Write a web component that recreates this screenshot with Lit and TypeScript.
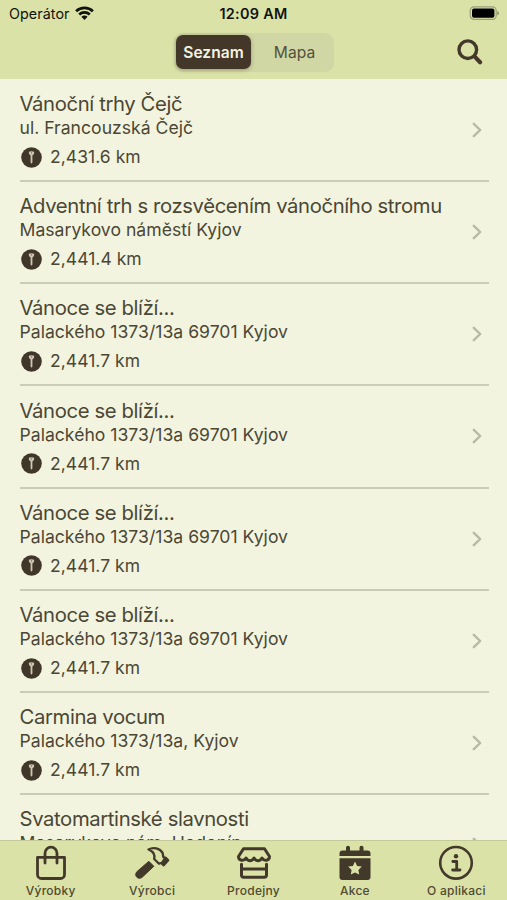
import { LitElement, html, css, svg } from "lit";
import { customElement, property } from "lit/decorators.js";

interface Market {
  title: string;
  address: string;
  distance: string;
}

const MARKETS: Market[] = [
  { title: "Vánoční trhy Čejč", address: "ul. Francouzská Čejč", distance: "2,431.6 km" },
  { title: "Adventní trh s rozsvěcením vánočního stromu", address: "Masarykovo náměstí Kyjov", distance: "2,441.4 km" },
  { title: "Vánoce se blíží...", address: "Palackého 1373/13a 69701 Kyjov", distance: "2,441.7 km" },
  { title: "Vánoce se blíží...", address: "Palackého 1373/13a 69701 Kyjov", distance: "2,441.7 km" },
  { title: "Vánoce se blíží...", address: "Palackého 1373/13a 69701 Kyjov", distance: "2,441.7 km" },
  { title: "Vánoce se blíží...", address: "Palackého 1373/13a 69701 Kyjov", distance: "2,441.7 km" },
  { title: "Carmina vocum", address: "Palackého 1373/13a, Kyjov", distance: "2,441.7 km" },
  { title: "Svatomartinské slavnosti", address: "Masarykovo nám. Hodonín", distance: "2,446.0 km" },
];

const TAB_ICONS: Record<string, unknown> = {
  bag: svg`<g fill="none" stroke="currentColor" stroke-width="2.800" stroke-linecap="round" stroke-linejoin="round">
    <path d="M4.500 13.300H31.500V30.500a4 4 0 0 1-4 4H8.500a4 4 0 0 1-4-4Z"/><path d="M12 19V9.200a6 6 0 0 1 12 0V19"/></g>`,
  hammer: svg`<path d="M14.800 17.300 19.800 22.300 8.200 33.200C4.500 36.500-.500 31.800 2.800 27.800Z" fill="currentColor" stroke="currentColor" stroke-width="1" stroke-linejoin="round"/>
    <path d="M14.500 5.500C19.300 2.800 25.800 4.200 28.600 8.800L29.400 13.200 31.800 13.800 34.200 16.200 29.700 21.300 27.200 19 25 19.700 20.200 15C21.300 10.800 18.700 7.300 14.500 5.500Z" fill="none" stroke="currentColor" stroke-width="2.300" stroke-linejoin="round"/>
    <path d="M30 13.800 32 13.800 34.500 16.200 30 21.200 27 18.300Z" fill="currentColor"/>`,
  store: svg`<g fill="none" stroke="currentColor" stroke-width="3" stroke-linecap="round" stroke-linejoin="round">
    <path d="M7.500 4.700H28.500L33.500 12.500C33.500 16.700 28.300 17.800 26 14 24 17.600 20 17.600 18 14 16 17.600 12 17.600 10 14 7.700 17.800 2.500 16.700 2.500 12.500Z"/>
    <path d="M5.500 20.300V31a2.200 2.200 0 0 0 2.200 2.200H28.300a2.200 2.200 0 0 0 2.200-2.200V20.300M5.500 25H30.500"/></g>`,
  calendar: svg`<path d="M2.500 12V9.500a3 3 0 0 1 3-3H9V3.800a2 2 0 0 1 4 0V6.500H22.500V3.800a2 2 0 0 1 4 0V6.500H30.500a3 3 0 0 1 3 3V12Z" fill="currentColor"/>
    <path fill-rule="evenodd" fill="currentColor" d="M2.500 14.300h31V33a3 3 0 0 1-3 3h-25a3 3 0 0 1-3-3ZM18 17.600l2.100 4.300 4.700.7-3.400 3.300.8 4.700-4.200-2.200-4.200 2.200.8-4.700-3.400-3.300 4.700-.7Z"/>`,
  info: svg`<circle cx="18" cy="18.800" r="15.800" fill="none" stroke="currentColor" stroke-width="2.600"/>
    <circle cx="18" cy="12.300" r="2.200" fill="currentColor"/>
    <path d="M14.800 17.500H18.700V26M14.600 26H22" fill="none" stroke="currentColor" stroke-width="2.800" stroke-linecap="round" stroke-linejoin="round"/>`,
};

@customElement("status-bar")
class StatusBar extends LitElement {
  static styles = css`
    :host { display: grid; grid-template-columns: 1fr auto 1fr; align-items: center; height: 27px; padding: 0 8px 0 9px; color: #11130c; }
    .carrier { display: flex; align-items: center; gap: 5.500px; font-size: 14.300px; letter-spacing: 0.080px; }
    .time { font-size: 14.400px; font-weight: 600; letter-spacing: 0.300px; margin-right: 1px; }
    .battery { justify-self: end; }
    svg { display: block; }
  `;
  render() {
    return html`
      <div class="carrier"><span>Operátor</span>
        <svg width="19" height="15" viewBox="0 0 19 15">
          <g fill="none" stroke="currentColor" stroke-width="2.700">
            <path d="M1.100 5.300C5.800.800 13.200.800 17.900 5.300"/><path d="M4.200 8.500C7.200 5.700 11.800 5.700 14.800 8.500"/></g>
          <path d="M6.400 10.700C8.200 9.200 10.800 9.200 12.600 10.700L9.500 13.900Z" fill="currentColor"/>
        </svg>
      </div>
      <div class="time">12:09 AM</div>
      <svg class="battery" width="30" height="15" viewBox="0 0 30 15">
        <rect x="1.200" y=".8" width="26" height="12.600" rx="3.800" fill="none" stroke="#9a9f78" stroke-width="1.200"/>
        <rect x="3" y="2.500" width="22.400" height="9.200" rx="2" fill="#000"/>
        <path d="M28.400 5v4.500Q29.900 8.800 29.900 7.200T28.400 5Z" fill="#868a67"/>
      </svg>`;
  }
}

@customElement("nav-header")
class NavHeader extends LitElement {
  static styles = css`
    :host { display: grid; grid-template-columns: 1fr auto 1fr; align-items: center; height: 52px; padding-right: 23px; padding-bottom: 2px; box-sizing: border-box; }
    .segmented { grid-column: 2; display: flex; width: 160px; height: 39px; box-sizing: border-box; padding: 2.500px; border-radius: 9px; background: #d0d6a4; margin-left: 23px; font-size: 15.600px; }
    .segment { flex: 1; display: flex; align-items: center; justify-content: center; border-radius: 7px; color: #55503a; }
    .segment + .segment { padding-left: 7px; }
    .selected { flex: none; width: 75px; background: #43372a; color: #f4f3e2; font-weight: 600; box-shadow: 0 1px 4px rgba(50, 45, 20, 0.35); }
    .search { justify-self: end; color: #43382a; }
  `;
  render() {
    return html`
      <div class="segmented"><div class="segment selected">Seznam</div><div class="segment">Mapa</div></div>
      <svg class="search" width="28" height="28" viewBox="0 0 28 28" fill="none" stroke="currentColor">
        <circle cx="11.800" cy="11.700" r="8.800" stroke-width="3.400"/><path d="m18.500 18.400 5.600 5.800" stroke-width="4.200" stroke-linecap="round"/>
      </svg>`;
  }
}

@customElement("market-row")
class MarketRow extends LitElement {
  static properties = { market: { attribute: false } };
  declare market: Market;
  static styles = css`
    :host { display: flex; align-items: center; height: 102.200px; flex: none; box-sizing: border-box; margin: 0 18px 0 19.500px; border-bottom: 2px solid #cacdb5; color: #4b4735; }
    .body { flex: 1; min-width: 0; height: 100%; box-sizing: border-box; padding-top: 12.300px; white-space: nowrap; }
    .title { font-size: 20.300px; line-height: 24px; letter-spacing: -0.380px; }
    .address { font-size: 17.600px; line-height: 23px; letter-spacing: 0.010px; }
    .distance { display: flex; align-items: center; gap: 8.500px; margin-top: 7px; padding-left: 1px; font-size: 17.500px; line-height: 22px; letter-spacing: 0.040px; }
    .chevron { color: #b7b9a2; margin-right: 6px; }
    svg { display: block; flex: none; }
  `;
  render() {
    const { title, address, distance } = this.market;
    return html`
      <div class="body">
        <div class="title">${title}</div>
        <div class="address">${address}</div>
        <div class="distance">
          <svg width="21" height="21" viewBox="0 0 21 21"><circle cx="10.500" cy="10.500" r="10.300" fill="#41362a"/>
            <path d="M7.800 4.700Q10.500 3.600 13.200 4.700 13.600 7.700 11.400 8.500V15.500Q10.500 17.400 9.600 15.500V8.500Q7.400 7.700 7.800 4.700Z" fill="#cfc7b5"/><circle cx="10.500" cy="5.900" r=".7" fill="#6d6354"/></svg>
          <span>${distance}</span>
        </div>
      </div>
      <svg class="chevron" width="12" height="18" viewBox="0 0 12 18" fill="none" stroke="currentColor" stroke-width="2.400" stroke-linecap="round" stroke-linejoin="round"><path d="m2.800 2.800 6.400 6.200-6.400 6.200"/></svg>`;
  }
}

@customElement("tab-item")
class TabItem extends LitElement {
  @property() icon = "";
  @property() label = "";
  static styles = css`
    :host { flex: 1 1 0; display: flex; flex-direction: column; align-items: center; padding-top: 3px; color: #43392a; }
    svg { display: block; }
    .label { margin-top: 1px; font-size: 12px; line-height: 16px; font-weight: 500; letter-spacing: 0.250px; white-space: nowrap; color: #4f4a31; }
  `;
  render() {
    return html`<svg width="36" height="38" viewBox="0 0 36 38">${TAB_ICONS[this.icon]}</svg><div class="label">${this.label}</div>`;
  }
}

@customElement("app-root")
class AppRoot extends LitElement {
  static styles = css`
    :host { display: flex; flex-direction: column; width: 507px; height: 900px; overflow: hidden; background: #f3f4df; font-family: Inter, "Noto Sans", sans-serif; }
    .top { flex: none; height: 79px; background: #dbe2a8; }
    .list { flex: 1; min-height: 0; overflow: hidden; display: flex; flex-direction: column; padding-top: 0.800px; }
    .tabs { flex: none; display: flex; height: 60px; box-sizing: border-box; border-top: 1px solid #c3c99b; background: #dbe2a8; }
  `;
  render() {
    return html`
      <div class="top"><status-bar></status-bar><nav-header></nav-header></div>
      <div class="list">${MARKETS.map((m) => html`<market-row .market=${m}></market-row>`)}</div>
      <div class="tabs">
        <tab-item icon="bag" label="Výrobky"></tab-item>
        <tab-item icon="hammer" label="Výrobci"></tab-item>
        <tab-item icon="store" label="Prodejny"></tab-item>
        <tab-item icon="calendar" label="Akce"></tab-item>
        <tab-item icon="info" label="O aplikaci"></tab-item>
      </div>`;
  }
}
